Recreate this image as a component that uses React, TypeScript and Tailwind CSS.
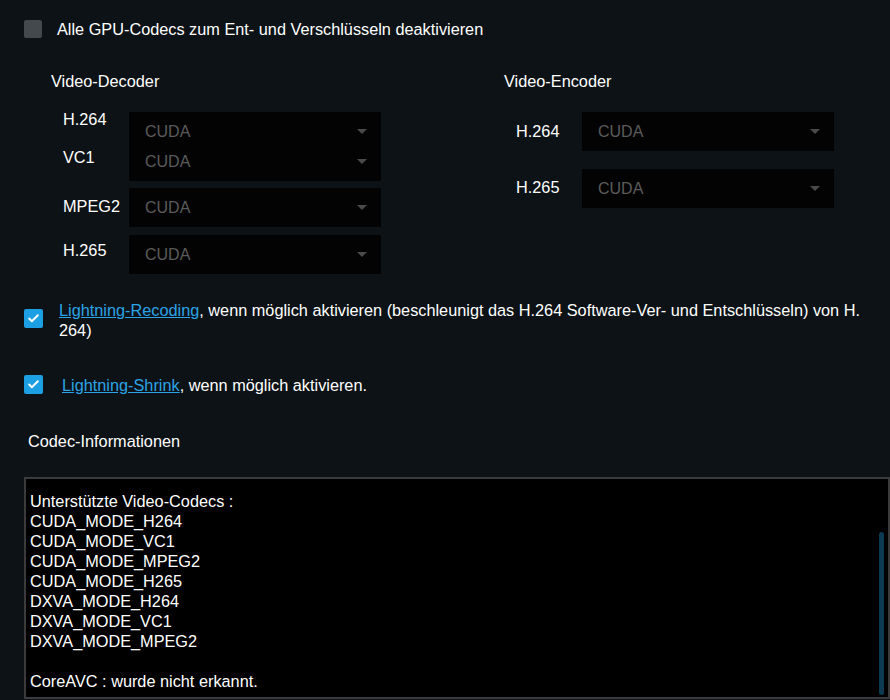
import { Check } from 'lucide-react';

const font = { fontFamily: '"Liberation Sans", Arial, sans-serif' };

function Select({ className = '' }: { className?: string }) {
  return (
    <div className={`relative flex h-[39px] w-[252px] items-center bg-[#030303] pl-[16px] pr-[14px] ${className}`}>
      <span className="flex-1 text-[16px] text-[#5b5b5b]">CUDA</span>
      <span className="h-0 w-0 border-x-[5px] border-t-[5px] border-x-transparent border-t-[#4a4a4a]" />
    </div>
  );
}

function Checkbox({ checked }: { checked: boolean }) {
  if (!checked) {
    return <div className="h-[18px] w-[18px] shrink-0 rounded-[2px] bg-[#44494d]" />;
  }
  return (
    <div className="flex h-[19px] w-[19px] shrink-0 items-center justify-center rounded-[2px] bg-[#1d9fe4]">
      <Check className="h-[13px] w-[13px] text-white" strokeWidth={3.5} />
    </div>
  );
}

const codecs = [
  'Unterstützte Video-Codecs :',
  'CUDA_MODE_H264',
  'CUDA_MODE_VC1',
  'CUDA_MODE_MPEG2',
  'CUDA_MODE_H265',
  'DXVA_MODE_H264',
  'DXVA_MODE_VC1',
  'DXVA_MODE_MPEG2',
];

export default function App() {
  return (
    <div className="h-[700px] w-[890px] overflow-hidden bg-[#0d1216] text-[16.3px] text-white" style={font}>
      {/* top option */}
      <div className="flex items-center gap-[15px] pl-[24px] pt-[20px]">
        <Checkbox checked={false} />
        <span className="leading-[18px]">Alle GPU-Codecs zum Ent- und Verschlüsseln deaktivieren</span>
      </div>

      {/* decoder / encoder */}
      <div className="mt-[34px] flex">
        <div className="w-[453px] pl-[51px]">
          <div className="leading-[18px]">Video-Decoder</div>
          <div className="mt-[22px] pl-[12px]">
            <div className="flex items-start">
              <span className="-mt-[2px] w-[66px] leading-[18px]">H.264</span>
              <Select />
            </div>
            <div className="relative -mt-[9px] flex items-start">
              <span className="w-[66px] pt-[6px] leading-[18px]">VC1</span>
              <Select />
            </div>
            <div className="mt-[7px] flex items-center">
              <span className="w-[66px] pb-[2px]">MPEG2</span>
              <Select />
            </div>
            <div className="mt-[8px] flex items-start">
              <span className="w-[66px] pt-[6px] leading-[18px]">H.265</span>
              <Select />
            </div>
          </div>
        </div>
        <div className="pl-[51px]">
          <div className="leading-[18px]">Video-Encoder</div>
          <div className="mt-[22px] pl-[12px]">
            <div className="flex items-center">
              <span className="w-[66px]">H.264</span>
              <Select />
            </div>
            <div className="mt-[18px] flex items-center">
              <span className="w-[66px] pb-[2px]">H.265</span>
              <Select />
            </div>
          </div>
        </div>
      </div>

      {/* lightning options */}
      <div className="mt-[26px] flex items-start gap-[16px] pl-[24px] pr-[12px]">
        <div className="pt-[9px]">
          <Checkbox checked />
        </div>
        <p className="leading-[20px]">
          <a className="text-[#2ba3e6] underline">Lightning-Recoding</a>, wenn möglich aktivieren (beschleunigt das H.264 Software-Ver- und Entschlüsseln) von H. 264)
        </p>
      </div>
      <div className="mt-[35px] flex items-center gap-[19px] pl-[24px]">
        <Checkbox checked />
        <span className="leading-[18px]">
          <a className="text-[#2ba3e6] underline">Lightning-Shrink</a>, wenn möglich aktivieren.
        </span>
      </div>

      {/* codec info */}
      <div className="mt-[38px] pl-[28px] leading-[18px]">Codec-Informationen</div>
      <div className="relative ml-[24px] mt-[27px] h-[222px] border-2 border-[#3b3b3b] bg-black pl-[4px] pt-[12px]">
        {codecs.map((c) => (
          <div key={c} className="leading-[20px]">{c}</div>
        ))}
        <div className="h-[20px]" />
        <div className="leading-[20px]">CoreAVC : wurde nicht erkannt.</div>
        <div className="absolute right-[4px] top-[53px] h-[163px] w-[5px] rounded-full bg-[#0b3a52]" />
      </div>
    </div>
  );
}
